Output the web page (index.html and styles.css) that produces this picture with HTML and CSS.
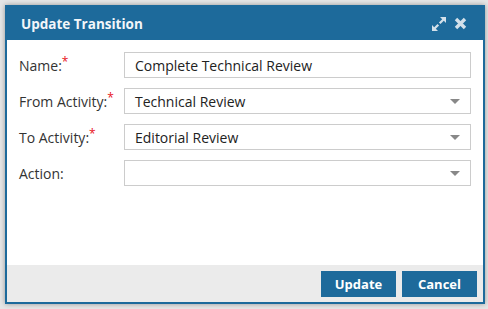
FILE: index.html
```html
<!DOCTYPE html>
<html lang="en">
<head>
    <meta charset="UTF-8">
    <title>Update Transition</title>
    <link rel="stylesheet" href="styles.css">
</head>
<body>
    <div class="dialog">
        <div class="dialog-header">
            <span class="dialog-title">Update Transition</span>
            <div class="dialog-tools">
                <svg class="tool" width="16" height="16" viewBox="0 0 16 16">
                    <path d="M9 1h6v6l-2.2-2.2-3.3 3.3-1.6-1.6 3.3-3.3z M7 15H1V9l2.2 2.2 3.3-3.3 1.6 1.6-3.3 3.3z" fill="#d3e0ea"/>
                </svg>
                <svg class="tool" width="13" height="13" viewBox="0 0 13 13">
                    <path d="M2 2L11 11M11 2L2 11" stroke="#d3e0ea" stroke-width="3.4"/>
                </svg>
            </div>
        </div>
        <form class="dialog-body">
            <div class="row">
                <label>Name:<sup>*</sup></label>
                <div class="field">Complete Technical Review</div>
            </div>
            <div class="row">
                <label>From Activity:<sup>*</sup></label>
                <div class="field select">Technical Review<span class="arrow"></span></div>
            </div>
            <div class="row">
                <label>To Activity:<sup>*</sup></label>
                <div class="field select">Editorial Review<span class="arrow"></span></div>
            </div>
            <div class="row">
                <label>Action:</label>
                <div class="field select"><span class="arrow"></span></div>
            </div>
        </form>
        <div class="dialog-footer">
            <button type="button">Update</button>
            <button type="button">Cancel</button>
        </div>
    </div>
</body>
</html>
```

FILE: styles.css
```css
*{margin:0;padding:0;box-sizing:border-box}
body{background:#e6e6e6;padding:5px;font-family:"Open Sans",sans-serif;font-size:14px;color:#333}
.dialog{width:480px;height:299px;border:2px solid #1d6a9b;background:#fff;display:flex;flex-direction:column;box-shadow:0 0 5px rgba(0,0,0,0.35)}
.dialog-header{height:33px;background:#1d6a9b;color:#f2f6f9;display:flex;align-items:center;justify-content:space-between;padding:0 16px 0 14px}
.dialog-title{font-weight:bold;font-size:13.5px}
.dialog-tools{display:flex;align-items:center;gap:7px}
.dialog-body{flex:1;padding:12px 12px 0 12px;display:flex;flex-direction:column;gap:10px}
.row{display:flex;align-items:center;height:26px}
.row label{width:105px;flex:none}
.row sup{color:#e8121b;font-size:12px;line-height:0;vertical-align:5px}
.field{flex:1;height:26px;border:1px solid #ccc;padding:0 10px;display:flex;align-items:center;position:relative;color:#222}
.arrow{position:absolute;right:10px;top:10px;width:0;height:0;border-left:5px solid transparent;border-right:5px solid transparent;border-top:5px solid #888}
.dialog-footer{height:37px;background:#ebebeb;display:flex;justify-content:flex-end;align-items:center;gap:6px;padding:0 6px}
.dialog-footer button{width:75px;height:26px;background:#1d6a9b;color:#fff;border:0;font-family:"Open Sans",sans-serif;font-weight:bold;font-size:13px}
```
